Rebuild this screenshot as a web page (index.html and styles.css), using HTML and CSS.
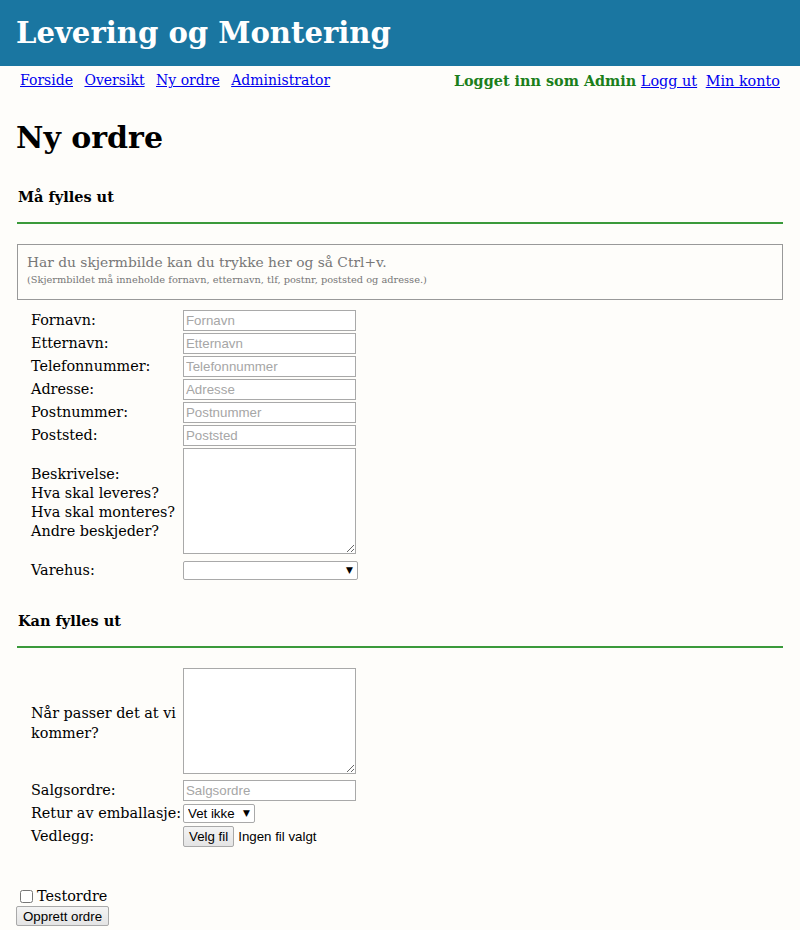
FILE: index.html
```html
<!DOCTYPE html>
<html lang="no">
<head>
<meta charset="utf-8">
<title>Ny ordre</title>
<link rel="stylesheet" href="styles.css">
</head>
<body>
<header class="topbar">
  <h1 class="site-title">Levering og Montering</h1>
</header>
<nav class="nav">
  <div class="nav-left">
    <a href="#">Forside</a>
    <a href="#">Oversikt</a>
    <a href="#">Ny ordre</a>
    <a href="#">Administrator</a>
  </div>
  <div class="nav-right">
    <span class="logged">Logget inn som Admin</span>
    <a href="#" class="logout">Logg ut</a>
    <a href="#" class="account">Min konto</a>
  </div>
</nav>
<main class="content">
  <h2 class="page-title">Ny ordre</h2>
  <h3 class="section-title">Må fylles ut</h3>
  <hr class="rule">
  <div class="paste-box">
    <div class="paste-main">Har du skjermbilde kan du trykke her og så Ctrl+v.</div>
    <div class="paste-sub">(Skjermbildet må inneholde fornavn, etternavn, tlf, postnr, poststed og adresse.)</div>
  </div>
  <div class="form-grid">
    <label class="lbl">Fornavn:</label><input class="field" placeholder="Fornavn">
    <label class="lbl">Etternavn:</label><input class="field" placeholder="Etternavn">
    <label class="lbl">Telefonnummer:</label><input class="field" placeholder="Telefonnummer">
    <label class="lbl">Adresse:</label><input class="field" placeholder="Adresse">
    <label class="lbl">Postnummer:</label><input class="field" placeholder="Postnummer">
    <label class="lbl">Poststed:</label><input class="field" placeholder="Poststed">
    <label class="lbl lbl-mid">Beskrivelse:<br>Hva skal leveres?<br>Hva skal monteres?<br>Andre beskjeder?</label><textarea class="area"></textarea>
    <label class="lbl">Varehus:</label><div class="selwrap"><select class="sel sel-wide"><option></option></select><span class="arrow">▼</span></div>
  </div>
  <h3 class="section-title second">Kan fylles ut</h3>
  <hr class="rule">
  <div class="form-grid grid2">
    <label class="lbl lbl-mid">Når passer det at vi kommer?</label><textarea class="area"></textarea>
    <label class="lbl">Salgsordre:</label><input class="field" placeholder="Salgsordre">
    <label class="lbl">Retur av emballasje:</label><div class="selwrap"><select class="sel sel-small"><option>Vet ikke</option></select><span class="arrow">▼</span></div>
    <label class="lbl">Vedlegg:</label><div class="filewrap"><button class="btn" type="button">Velg fil</button><span class="nofile">Ingen fil valgt</span></div>
  </div>
  <div class="bottom">
    <label class="check"><input type="checkbox" class="cb"> Testordre</label>
    <button class="btn submit" type="button">Opprett ordre</button>
  </div>
</main>
</body>
</html>
```
FILE: styles.css
```css
html, body {
  margin: 0;
  padding: 0;
  background: #fefdfa;
  font-family: "DejaVu Serif", Georgia, serif;
  font-size: 14.4px;
  color: #000;
}
.topbar {
  background: #1a76a1;
  height: 66px;
  display: flex;
  align-items: center;
  padding-left: 16px;
}
.site-title {
  margin: 0;
  color: #fff;
  font-size: 29.1px;
  font-weight: bold;
}
.nav {
  display: flex;
  justify-content: space-between;
  padding: 1px 20px 0 20px;
  height: 26px;
  align-items: center;
}
.nav-left { font-size: 14px; }
.nav a {
  color: #0000ee;
  margin-right: 7px;
}
.nav-right a.logout { margin: 0; }
.nav-right a.account { margin: 0 0 0 4px; }
.logged {
  color: #1b7f1b;
  font-weight: bold;
}
.content {
  padding: 0 17px;
}
.page-title {
  margin: 25px 0 0 -1px;
  font-size: 30px;
  font-weight: bold;
  line-height: 40px;
}
.section-title {
  margin: 29px 0 0 1px;
  font-size: 14.5px;
  font-weight: bold;
  line-height: 20px;
}
.section-title.second { margin-top: 30px; }
.rule {
  border: 0;
  height: 2px;
  background: #3a9a3a;
  margin: 15px 0 0 0;
}
.paste-box {
  margin-top: 20px;
  border: 1px solid #999;
  padding: 7px 9px 0;
  box-sizing: border-box;
  height: 56px;
  color: #777;
}
.paste-main { font-size: 13.8px; line-height: 20px; }
.paste-sub { font-size: 9.8px; line-height: 13px; margin-top: 1px; }
.form-grid {
  display: grid;
  grid-template-columns: 152px max-content;
  row-gap: 2px;
  padding-left: 14px;
  margin-top: 10px;
  align-items: center;
}
.grid2 { margin-top: 20px; }
.lbl { line-height: 21px; }
.lbl-mid { line-height: 19px; }
.grid2 .lbl-mid { line-height: 20px; margin-right: -4px; }
.field {
  width: 173px;
  height: 21px;
  box-sizing: border-box;
  border: 1px solid #a9a9a9;
  background: #fff;
  padding: 1px 2px;
  font-family: "Liberation Sans", Arial, sans-serif;
  font-size: 13.3px;
  margin: 0;
}
.field::placeholder { color: #a6a6a6; }
.area {
  width: 173px;
  height: 106px;
  box-sizing: border-box;
  border: 1px solid #a9a9a9;
  background: #fff;
  margin: 0 0 4px 0;
  resize: both;
}
.selwrap {
  position: relative;
  display: flex;
  justify-self: start;
}
.sel {
  -webkit-appearance: none;
  appearance: none;
  height: 19px;
  box-sizing: border-box;
  border: 1px solid #a9a9a9;
  border-radius: 2px;
  background: #fff;
  font-family: "Liberation Sans", Arial, sans-serif;
  font-size: 13.3px;
  padding: 0 16px 0 4px;
  margin: 0;
  color: #000;
}
.sel-wide { width: 175px; }
.sel-small { width: 72px; }
.arrow {
  position: absolute;
  right: 5px;
  top: 4px;
  font-size: 9px;
  line-height: 10px;
  font-family: "DejaVu Sans", sans-serif;
  pointer-events: none;
}
.filewrap { display: flex; align-items: center; gap: 4px; }
.btn {
  font-family: "Liberation Sans", Arial, sans-serif;
  font-size: 13.3px;
  height: 21px;
  padding: 0 5px;
  border: 1px solid #a9a9a9;
  border-radius: 2px;
  background: linear-gradient(#f4f4f4, #e4e4e4);
  color: #000;
  margin: 0;
}
.nofile {
  font-family: "Liberation Sans", Arial, sans-serif;
  font-size: 13.3px;
}
.bottom {
  margin-top: 40px;
  display: flex;
  flex-direction: column;
  align-items: flex-start;
  padding-bottom: 4px;
}
.check { display: flex; align-items: center; line-height: 19px; margin-left: 3px; }
.cb { margin: 0 4px 0 0; width: 13px; height: 13px; }
.submit { margin-left: -1px; height: 20px; padding: 0 6px; }
```
